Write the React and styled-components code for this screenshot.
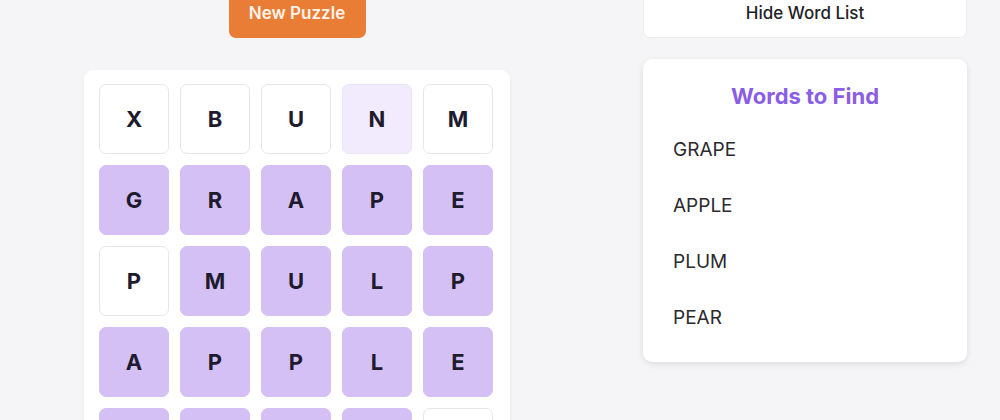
import React from "react";
import styled, { createGlobalStyle } from "styled-components";

const GlobalStyle = createGlobalStyle`
  html, body {
    margin: 0;
    padding: 0;
    background: #f5f5f7;
    font-family: Inter, "Noto Sans", "Liberation Sans", sans-serif;
  }
`;

const grid = [
  ["X", "B", "U", "N", "M"],
  ["G", "R", "A", "P", "E"],
  ["P", "M", "U", "L", "P"],
  ["A", "P", "P", "L", "E"],
  ["P", "E", "A", "R", "Q"],
];

const states = [
  ["", "", "", "hover", ""],
  ["found", "found", "found", "found", "found"],
  ["", "found", "found", "found", "found"],
  ["found", "found", "found", "found", "found"],
  ["found", "found", "found", "found", ""],
];

const words = ["GRAPE", "APPLE", "PLUM", "PEAR"];

const App = () => {
  return (
    <>
      <GlobalStyle />
      <Page>
        <LeftColumn>
          <NewPuzzleButton>New Puzzle</NewPuzzleButton>
          <Board>
            {grid.map((row, r) =>
              row.map((letter, c) => (
                <Cell key={`${r}-${c}`} $state={states[r][c]}>
                  {letter}
                </Cell>
              ))
            )}
          </Board>
        </LeftColumn>
        <RightColumn>
          <ToggleButton>Hide Word List</ToggleButton>
          <WordCard>
            <WordTitle>Words to Find</WordTitle>
            <WordList>
              {words.map((w) => (
                <WordItem key={w}>{w}</WordItem>
              ))}
            </WordList>
          </WordCard>
        </RightColumn>
      </Page>
    </>
  );
};

export default App;

const Page = styled.div`
  display: flex;
  align-items: flex-start;
  gap: 133px;
  padding-left: 84px;
  margin-top: -12px;
  height: 432px;
  overflow: hidden;
`;

const LeftColumn = styled.div`
  width: 426px;
  display: flex;
  flex-direction: column;
  align-items: center;
  gap: 32px;
`;

const NewPuzzleButton = styled.button`
  height: 50px;
  width: 137px;
  border: none;
  border-radius: 7px;
  background: #e97d36;
  color: #fdf3ea;
  font-family: inherit;
  font-size: 17px;
  font-weight: 600;
  padding: 0;
  cursor: pointer;
`;

const Board = styled.div`
  width: 100%;
  box-sizing: border-box;
  background: #ffffff;
  border-radius: 9px;
  padding: 14px 15px;
  display: grid;
  grid-template-columns: repeat(5, 70px);
  gap: 11px;
  box-shadow: 0 1px 4px rgba(0, 0, 0, 0.04);
`;

const Cell = styled.div`
  height: 70px;
  box-sizing: border-box;
  border-radius: 7px;
  display: flex;
  align-items: center;
  justify-content: center;
  font-size: 22px;
  font-weight: 700;
  color: #1e1b2e;
  background: ${({ $state }) =>
    $state === "found" ? "#d4c0f5" : $state === "hover" ? "#f1ebfd" : "#ffffff"};
  border: 1px solid
    ${({ $state }) =>
      $state === "found" ? "#d4c0f5" : $state === "hover" ? "#ebe4f7" : "#e6e6e9"};
`;

const RightColumn = styled.div`
  width: 324px;
  display: flex;
  flex-direction: column;
  gap: 21px;
`;

const ToggleButton = styled.button`
  height: 50px;
  width: 100%;
  background: #ffffff;
  border: 1px solid #ececef;
  border-radius: 7px;
  color: #222226;
  font-family: inherit;
  font-size: 17px;
  font-weight: 500;
  padding: 0;
  cursor: pointer;
`;

const WordCard = styled.div`
  background: #ffffff;
  border-radius: 9px;
  padding: 23px 30px 16px;
  box-shadow: 0 2px 6px rgba(0, 0, 0, 0.1);
`;

const WordTitle = styled.h2`
  margin: 0 0 12px;
  text-align: center;
  font-size: 22px;
  line-height: 28px;
  font-weight: 700;
  color: #8a5ee4;
`;

const WordList = styled.ul`
  list-style: none;
  margin: 0;
  padding: 0;
`;

const WordItem = styled.li`
  font-size: 19px;
  line-height: 24px;
  padding: 16px 0;
  color: #2b2b2f;
`;
